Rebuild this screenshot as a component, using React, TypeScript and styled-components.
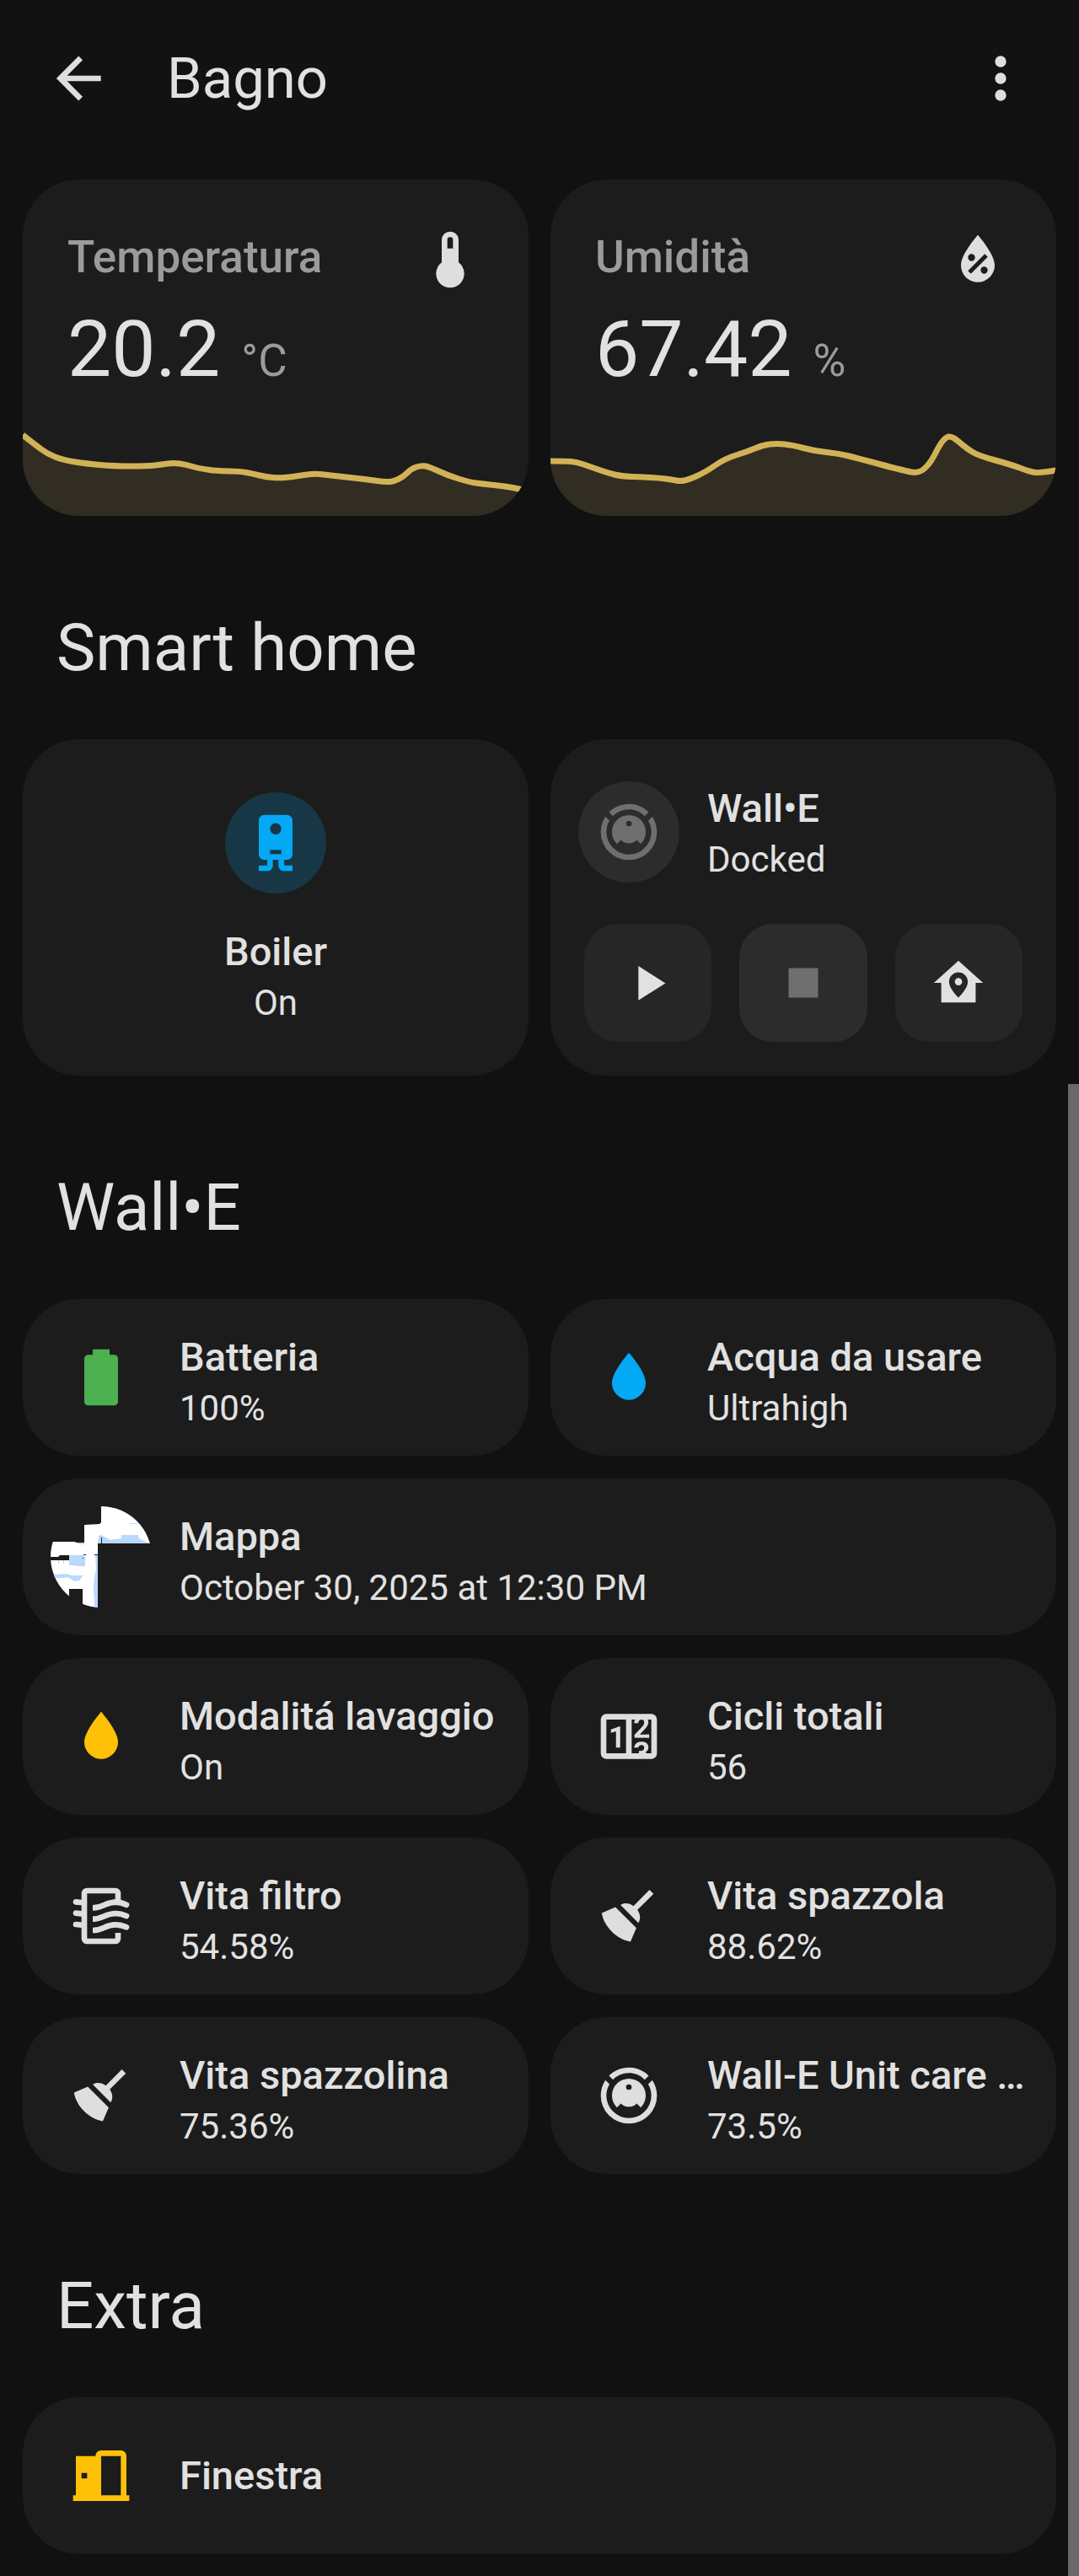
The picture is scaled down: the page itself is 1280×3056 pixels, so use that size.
import React from "react";
import styled, { createGlobalStyle } from "styled-components";

const GlobalStyle = createGlobalStyle`
  *, *::before, *::after { box-sizing: border-box; }
  body {
    margin: 0;
    background: #111111;
    color: #e1e1e1;
    font-family: Roboto, "Noto Sans", sans-serif;
  }
  h1, h2, p { margin: 0; font-weight: 400; }
  button { font: inherit; color: inherit; border: 0; padding: 0; background: none; cursor: pointer; }
`;

const paths = {
  arrowLeft: "M20,11V13H8L13.5,18.5L12.08,19.92L4.16,12L12.08,4.08L13.5,5.5L8,11H20Z",
  dots:
    "M12,16A2,2 0 0,1 14,18A2,2 0 0,1 12,20A2,2 0 0,1 10,18A2,2 0 0,1 12,16M12,10A2,2 0 0,1 14,12A2,2 0 0,1 12,14A2,2 0 0,1 10,12A2,2 0 0,1 12,10M12,4A2,2 0 0,1 14,6A2,2 0 0,1 12,8A2,2 0 0,1 10,6A2,2 0 0,1 12,4Z",
  thermometer: "M15 13V5A3 3 0 0 0 9 5V13A5 5 0 1 0 15 13M12 4A1 1 0 0 1 13 5V8H11V5A1 1 0 0 1 12 4Z",
  waterPercent:
    "M12,3.25C12,3.25 6,10 6,14C6,17.32 8.69,20 12,20A6,6 0 0,0 18,14C18,10 12,3.25 12,3.25M14.47,9.97L15.53,11.03L9.53,17.03L8.47,15.97M9.75,10A1.25,1.25 0 0,1 11,11.25A1.25,1.25 0 0,1 9.75,12.5A1.25,1.25 0 0,1 8.5,11.25A1.25,1.25 0 0,1 9.75,10M14.25,14.5A1.25,1.25 0 0,1 15.5,15.75A1.25,1.25 0 0,1 14.25,17A1.25,1.25 0 0,1 13,15.75A1.25,1.25 0 0,1 14.25,14.5Z",
  water: "M12,20A6,6 0 0,1 6,14C6,10 12,3.25 12,3.25C12,3.25 18,10 18,14A6,6 0 0,1 12,20Z",
  battery:
    "M16.67,4H15V2H9V4H7.33A1.33,1.33 0 0,0 6,5.33V20.67C6,21.4 6.6,22 7.33,22H16.67A1.33,1.33 0 0,0 18,20.67V5.33C18,4.6 17.4,4 16.67,4Z",
  boiler:
    "M8 2C6.89 2 6 2.89 6 4V16C6 17.11 6.89 18 8 18H9V20H6V22H9C10.11 22 11 21.11 11 20V18H13V20C13 21.11 13.89 22 15 22H18V20H15V18H16C17.11 18 18 17.11 18 16V4C18 2.89 17.11 2 16 2H8M12 4.97A2 2 0 0 1 14 6.97A2 2 0 0 1 12 8.97A2 2 0 0 1 10 6.97A2 2 0 0 1 12 4.97M10 14.5H14V16H10V14.5Z",
  play: "M8,5.14V19.14L19,12.14L8,5.14Z",
  stop: "M18,18H6V6H18V18Z",
  homeMarker:
    "M12,3L2,12H5V20H19V12H22L12,3M12,7.7C14.1,7.7 15.8,9.4 15.8,11.5C15.8,14.5 12,18 12,18C12,18 8.2,14.5 8.2,11.5C8.2,9.4 9.9,7.7 12,7.7M12,10A1.5,1.5 0 0,0 10.5,11.5A1.5,1.5 0 0,0 12,13A1.5,1.5 0 0,0 13.5,11.5A1.5,1.5 0 0,0 12,10Z",
  vacuum:
    "M12,2C14.65,2 17.19,3.06 19.07,4.93L17.65,6.35C16.15,4.85 14.12,4 12,4C9.88,4 7.84,4.84 6.35,6.35L4.93,4.93C6.81,3.06 9.35,2 12,2M3.66,6.5L5.11,7.94C4.39,9.17 4,10.57 4,12A8,8 0 0,0 12,20A8,8 0 0,0 20,12C20,10.57 19.61,9.17 18.88,7.94L20.34,6.5C21.42,8.12 22,10.04 22,12A10,10 0 0,1 12,22A10,10 0 0,1 2,12C2,10.04 2.58,8.12 3.66,6.5M12,6A6,6 0 0,1 18,12C18,13.59 17.37,15.12 16.24,16.24L14.83,14.83C14.08,15.58 13.06,16 12,16C10.94,16 9.92,15.58 9.17,14.83L7.76,16.24C6.63,15.12 6,13.59 6,12A6,6 0 0,1 12,6M12,8A1,1 0 0,0 11,9A1,1 0 0,0 12,10A1,1 0 0,0 13,9A1,1 0 0,0 12,8Z",
  counter:
    "M4,4H20A2,2 0 0,1 22,6V18A2,2 0 0,1 20,20H4A2,2 0 0,1 2,18V6A2,2 0 0,1 4,4M4,6V18H11V6H4M20,18V6H18.76C19,6.54 18.95,7.07 18.95,7.13C18.88,7.8 18.41,8.5 18.24,8.75L15.91,11.3L19.23,11.28L19.24,12.5L14.04,12.47L14,11.47C14,11.47 17.05,8.24 17.2,7.95C17.34,7.67 17.91,6 16.5,6C15.27,6.05 15.41,7.3 15.41,7.3L13.87,7.31C13.87,7.31 13.88,6.65 14.25,6H13V18H15.58L15.57,17.14L16.54,17.13C16.54,17.13 17.45,16.97 17.46,16.08C17.5,15.08 16.65,15.08 16.5,15.08C16.37,15.08 15.43,15.13 15.43,15.95H13.91C13.91,15.95 13.95,13.89 16.5,13.89C19.1,13.89 18.96,15.91 18.96,15.91C18.96,15.91 19,17.16 17.85,17.63L18.37,18H20M8.92,16H7.42V10.2L5.62,10.76V9.53L8.76,8.41H8.92V16Z",
  broom:
    "M19.36,2.72L20.78,4.14L15.06,9.85C16.13,11.39 16.28,13.24 15.38,14.44L9.06,8.12C10.26,7.22 12.11,7.37 13.65,8.44L19.36,2.72M5.93,17.57C3.92,15.56 2.69,13.16 2.35,10.92L7.23,8.83L14.67,16.27L12.58,21.15C10.34,20.81 7.94,19.58 5.93,17.57Z",
  door: "M12,3C10.89,3 10,3.89 10,5H3V19H2V21H22V19H21V5C21,3.89 20.11,3 19,3H12M12,5H19V19H12V5M5,11H7V13H5V11Z",
};

type IconName = keyof typeof paths | "airFilter";

const Svg = styled.svg<{ $size: number }>`
  display: block;
  flex: none;
  width: ${(p) => p.$size}px;
  height: ${(p) => p.$size}px;
  fill: currentColor;
`;

function Icon({ name, size = 80 }: { name: IconName; size?: number }) {
  return (
    <Svg $size={size} viewBox="0 0 24 24" aria-hidden="true">
      {name === "airFilter" ? (
        <g fill="none" stroke="currentColor" strokeWidth="2">
          <path d="M18 7V4A1 1 0 0 0 17 3H7A1 1 0 0 0 6 4V20A1 1 0 0 0 7 21H17A1 1 0 0 0 18 20V18" />
          {[0, 4, 8].map((y) => (
            <g key={y} transform={`translate(0 ${y})`}>
              <path strokeLinecap="round" d="M3 7L5 7.2M17 7.1C18.7 7.1 20 7.5 21 8" />
              <path d="M9 9.1C13 9.1 13.2 7.1 17.2 7.1" />
            </g>
          ))}
        </g>
      ) : (
        <path fillRule="evenodd" d={paths[name]} />
      )}
    </Svg>
  );
}

const Page = styled.div`
  position: relative;
  min-height: 100vh;
`;

const Header = styled.header`
  display: flex;
  align-items: center;
  height: 186px;
  padding: 0 53px;
  background: #121212;
`;

const Title = styled.h1`
  flex: 1;
  margin-left: 65px;
  font-size: 67px;
  line-height: 80px;
`;

const IconButton = styled.button`
  color: #dedede;
`;

const Content = styled.main`
  display: flex;
  flex-direction: column;
  padding: 27px 27px 26px;
`;

const SectionTitle = styled.h2`
  height: 265px;
  padding: 109px 40px 0;
  font-size: 78px;
  line-height: 96px;
`;

const Grid = styled.section`
  display: grid;
  grid-template-columns: repeat(2, minmax(0, 1fr));
  gap: 27px 26px;
`;

const Card = styled.article<{ $wide?: boolean; $tall?: boolean }>`
  display: flex;
  min-width: 0;
  min-height: ${(p) => (p.$tall ? 399 : 186)}px;
  grid-column: ${(p) => (p.$wide ? "1 / -1" : "auto")};
  border-radius: 67px;
  background: #1c1c1c;
  overflow: hidden;
`;

const SensorCard = styled(Card)`
  flex-direction: column;
`;

const SensorHead = styled.div`
  display: flex;
  align-items: flex-start;
  justify-content: space-between;
  padding: 55px 53px 0;
  color: #dedede;
`;

const SensorName = styled.p`
  color: #9b9b9b;
  font-size: 53px;
  font-weight: 500;
  line-height: 74px;
`;

const SensorValue = styled.p`
  margin-top: 12px;
  padding: 0 53px;
  font-size: 93px;
  line-height: 110px;
`;

const Unit = styled.span`
  margin-left: 25px;
  color: #9b9b9b;
  font-size: 53px;
  line-height: 60px;
`;

const Graph = styled.svg`
  display: block;
  width: 100%;
  height: 142px;
`;

type Point = [number, number];

const temperature: Point[] = [
  [0, 46], [14, 57], [30, 69], [49, 76], [75, 80], [108, 83], [149, 83], [165, 81], [179, 79], [193, 81],
  [210, 86], [234, 89], [257, 89], [273, 92], [289, 96], [304, 97], [318, 96], [336, 93], [349, 92],
  [365, 94], [402, 98], [432, 102], [440, 101], [451, 96], [461, 86], [473, 82], [483, 84], [504, 94],
  [530, 102], [545, 104], [573, 107], [589, 110], [600, 113],
];

const humidity: Point[] = [
  [0, 77], [17, 77], [31, 78], [48, 84], [68, 91], [84, 95], [109, 96], [129, 97], [144, 99], [154, 101],
  [164, 99], [184, 90], [207, 74], [233, 66], [252, 58], [268, 56], [287, 58], [313, 65], [342, 68],
  [366, 74], [399, 83], [423, 89], [433, 91], [442, 88], [452, 77], [462, 57], [470, 48], [476, 48],
  [482, 52], [495, 63], [509, 71], [546, 81], [570, 90], [580, 91], [600, 88],
];

/* Quadratic curve through the midpoints of neighbouring samples */
function smooth(points: Point[]) {
  let d = `M${points[0][0]},${points[0][1]}`;
  for (let i = 1; i < points.length - 1; i++) {
    const [x, y] = points[i];
    const [nx, ny] = points[i + 1];
    d += `Q${x},${y} ${(x + nx) / 2},${(y + ny) / 2}`;
  }
  const [lx, ly] = points[points.length - 1];
  return `${d}L${lx},${ly}`;
}

function Sensor(props: { name: string; value: string; unit: string; icon: IconName; data: Point[] }) {
  const line = smooth(props.data);
  return (
    <SensorCard $tall>
      <SensorHead>
        <SensorName>{props.name}</SensorName>
        <Icon name={props.icon} />
      </SensorHead>
      <SensorValue>
        {props.value}
        <Unit>{props.unit}</Unit>
      </SensorValue>
      <Graph viewBox="0 0 600 142" preserveAspectRatio="none" aria-hidden="true">
        <path d={`${line}V142H0Z`} fill="#322d23" />
        <path d={line} fill="none" stroke="#d2b256" strokeWidth="7" />
      </Graph>
    </SensorCard>
  );
}

const TileCard = styled(Card)`
  align-items: center;
  gap: 33px;
  padding: 0 33px;
`;

const BoilerCard = styled(Card)`
  flex-direction: column;
  align-items: center;
  justify-content: center;
  gap: 32px;
  text-align: center;
`;

const Badge = styled.div<{ $color: string; $background?: string }>`
  display: flex;
  flex: none;
  align-items: center;
  justify-content: center;
  width: 120px;
  height: 120px;
  border-radius: 50%;
  overflow: hidden;
  color: ${(p) => p.$color};
  background: ${(p) => p.$background ?? "transparent"};
`;

const Texts = styled.div`
  min-width: 0;
`;

const Name = styled.p`
  overflow: hidden;
  font-size: 47px;
  font-weight: 500;
  line-height: 74px;
  text-overflow: ellipsis;
  white-space: nowrap;
`;

const State = styled.p`
  font-size: 42px;
  line-height: 48px;
  white-space: nowrap;
`;

function Tile(props: {
  name: string;
  state?: string;
  icon?: IconName;
  color?: string;
  wide?: boolean;
  picture?: React.ReactNode;
}) {
  return (
    <TileCard $wide={props.wide}>
      <Badge $color={props.color ?? "#dedede"}>
        {props.picture}
        {props.icon && <Icon name={props.icon} />}
      </Badge>
      <Texts>
        <Name>{props.name}</Name>
        {props.state && <State>{props.state}</State>}
      </Texts>
    </TileCard>
  );
}

function FloorMap() {
  return (
    <Svg $size={120} viewBox="0 0 120 120" role="img" aria-label="Mappa">
      <path fill="#ffffff" d="M60 0H120V44H56V120H38V98H22V120H0V64H22V58H11L9 60H0V44L3 42H28L31 43H40V22L58 21L60 19Z" />
      <g fill="#b9d9ff">
        <path d="M56 44L57 35L60 34L71 40L84 38V34H104L105 38L113 42L118 44Z" />
        <path d="M94 20H102V21H94ZM31 43H40V45H34Z" />
        <path d="M22 58H39L41 61V71L32 71L28 70H22ZM9 64H10V68H9ZM15 64H16V68H15Z" />
        <path d="M3 81L20 80L24 82H39L36 85L35 88L28 89L24 86L20 84L16 85H4Z" />
        <path d="M53 57H56V120H52V112L51 98L52 83L54 75Z" />
      </g>
      <path fill="#1c1c1c" d="M60 37H61V44H60ZM39 57H42V58H39ZM52 57H56V58H52ZM38 61H39V62H38Z" />
    </Svg>
  );
}

const VacuumCard = styled(Card)`
  flex-direction: column;
  justify-content: space-between;
  padding: 45px 40px 40px;
`;

const VacuumHead = styled.div`
  display: flex;
  align-items: center;
  gap: 33px;
  margin-left: -7px;
`;

const VacuumTexts = styled(Texts)`
  padding-bottom: 8px;
`;

const Controls = styled.div`
  display: grid;
  grid-template-columns: repeat(3, 1fr);
  gap: 33px;
`;

const Control = styled.button`
  display: flex;
  align-items: center;
  justify-content: center;
  height: 140px;
  border-radius: 40px;
  background: #262626;

  &:disabled {
    color: #6f6f6f;
    background: #2c2c2c;
    cursor: default;
  }
`;

const ScrollThumb = styled.div`
  position: absolute;
  top: 1286px;
  right: 0;
  bottom: 0;
  width: 13px;
  background: #696969;
`;

export default function App() {
  return (
    <Page>
      <GlobalStyle />
      <Header>
        <IconButton type="button" aria-label="Indietro">
          <Icon name="arrowLeft" />
        </IconButton>
        <Title>Bagno</Title>
        <IconButton type="button" aria-label="Menu">
          <Icon name="dots" />
        </IconButton>
      </Header>
      <Content>
        <Grid>
          <Sensor name="Temperatura" value="20.2" unit="°C" icon="thermometer" data={temperature} />
          <Sensor name="Umidità" value="67.42" unit="%" icon="waterPercent" data={humidity} />
        </Grid>

        <SectionTitle>Smart home</SectionTitle>
        <Grid>
          <BoilerCard $tall>
            <Badge $color="#03a9f4" $background="#183746">
              <Icon name="boiler" />
            </Badge>
            <Texts>
              <Name>Boiler</Name>
              <State>On</State>
            </Texts>
          </BoilerCard>
          <VacuumCard $tall>
            <VacuumHead>
              <Badge $color="#6f6f6f" $background="#2c2c2c">
                <Icon name="vacuum" />
              </Badge>
              <VacuumTexts>
                <Name>Wall•E</Name>
                <State>Docked</State>
              </VacuumTexts>
            </VacuumHead>
            <Controls>
              <Control type="button" aria-label="Avvia">
                <Icon name="play" size={70} />
              </Control>
              <Control type="button" aria-label="Ferma" disabled>
                <Icon name="stop" size={70} />
              </Control>
              <Control type="button" aria-label="Torna alla base">
                <Icon name="homeMarker" size={70} />
              </Control>
            </Controls>
          </VacuumCard>
        </Grid>

        <SectionTitle>Wall•E</SectionTitle>
        <Grid>
          <Tile name="Batteria" state="100%" icon="battery" color="#4caf50" />
          <Tile name="Acqua da usare" state="Ultrahigh" icon="water" color="#03a9f4" />
          <Tile name="Mappa" state="October 30, 2025 at 12:30 PM" picture={<FloorMap />} wide />
          <Tile name="Modalitá lavaggio" state="On" icon="water" color="#ffc107" />
          <Tile name="Cicli totali" state="56" icon="counter" />
          <Tile name="Vita filtro" state="54.58%" icon="airFilter" />
          <Tile name="Vita spazzola" state="88.62%" icon="broom" />
          <Tile name="Vita spazzolina" state="75.36%" icon="broom" />
          <Tile name="Wall-E Unit care …" state="73.5%" icon="vacuum" />
        </Grid>

        <SectionTitle>Extra</SectionTitle>
        <Grid>
          <Tile name="Finestra" icon="door" color="#ffc107" wide />
        </Grid>
      </Content>
      <ScrollThumb />
    </Page>
  );
}
